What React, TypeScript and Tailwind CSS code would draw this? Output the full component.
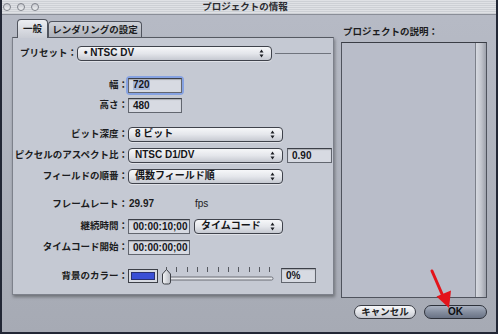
import React from "react";

const Arrows = () => (
  <svg width="5" height="9" viewBox="0 0 5 9" className="shrink-0">
    <path d="M2.5 0.5 L4.5 3.5 H0.5 Z M0.5 5.5 H4.5 L2.5 8.5 Z" fill="#1d1f24" />
  </svg>
);

type Box = { className?: string; children?: React.ReactNode };

function Popup({ className = "", children }: Box) {
  return (
    <div
      className={`flex h-[15px] items-center justify-between rounded-[4px] border border-[#3f424b] bg-gradient-to-b from-[#f6f7f9] via-[#e4e6eb] to-[#c6c9d1] pl-[6px] pr-[7px] text-[10px] font-bold text-[#141518] shadow-[0_1px_0_rgba(255,255,255,0.45)] ${className}`}
    >
      <span className="whitespace-nowrap leading-none">{children}</span>
      <Arrows />
    </div>
  );
}

function Field({ className = "", children }: Box) {
  return (
    <div
      className={`flex h-[15px] items-center border border-[#62666f] border-t-[#3c3f47] bg-[#d7dae2] px-[4px] text-[10px] font-bold text-[#15161a] shadow-[inset_0_1px_1px_rgba(0,0,0,0.22)] ${className}`}
    >
      {children}
    </div>
  );
}

function Row({ label, className = "", children }: { label: string; className?: string; children: React.ReactNode }) {
  return (
    <div className={`flex h-[16px] items-center ${className}`}>
      <div className="flex w-[115px] shrink-0 justify-end whitespace-nowrap text-[9.5px] font-bold leading-none text-[#1b1c20]">
        {label}
      </div>
      {children}
    </div>
  );
}

const Slider = () => (
  <svg width="112" height="19" viewBox="0 0 112 19" className="ml-[4px] shrink-0">
    {[4, 14, 25, 35, 45, 56, 66, 76, 87, 97, 107].map((x) => (
      <line key={x} x1={x + 0.5} y1="1" x2={x + 0.5} y2="6" stroke="#55585f" strokeWidth="1" />
    ))}
    <rect x="3" y="11" width="108" height="3" rx="1.5" fill="#e6e8ec" stroke="#6a6d75" strokeWidth="1" />
    <defs>
      <linearGradient id="knob" x1="0" y1="0" x2="1" y2="0">
        <stop offset="0" stopColor="#f4f5f7" />
        <stop offset="1" stopColor="#b8bbc3" />
      </linearGradient>
    </defs>
    <path d="M4.5 3.5 L8.5 8 V16 Q8.5 18 6.5 18 H2.5 Q0.5 18 0.5 16 V8 Z" fill="url(#knob)" stroke="#3d4047" strokeWidth="1" />
  </svg>
);

export default function App() {
  return (
    <div className="relative box-border flex h-[334px] w-[498px] flex-col overflow-hidden border-2 border-t-0 border-[#222735] bg-gradient-to-b from-[#b7bbc6] to-[#a6aab4] font-['Liberation_Sans','Noto_Sans_CJK_JP',sans-serif] text-[#1b1c20]">
      {/* title bar */}
      <div className="relative flex h-[15px] shrink-0 items-center justify-center border-b border-[#8a8e98] bg-[repeating-linear-gradient(180deg,#dfe1e5_0px,#dfe1e5_1px,#cdd0d5_1px,#cdd0d5_2px)]">
        <div className="absolute left-[1px] top-[3px] flex gap-[6px]">
          <span className="h-[8px] w-[8px] rounded-full border border-[#80838b] bg-gradient-to-b from-[#c8cad0] to-[#eef0f2]" />
          <span className="h-[8px] w-[8px] rounded-full border border-[#80838b] bg-gradient-to-b from-[#c8cad0] to-[#eef0f2]" />
          <span className="h-[8px] w-[8px] rounded-full border border-[#80838b] bg-gradient-to-b from-[#c8cad0] to-[#eef0f2]" />
        </div>
        <span className="pr-[8px] text-[9.5px] font-bold leading-none text-[#2a2b30]">プロジェクトの情報</span>
      </div>

      {/* main */}
      <div className="flex pl-[10px] pt-[4px]">
        {/* left: tabs + panel */}
        <div className="flex w-[322px] flex-col">
          <div className="relative z-10 flex h-[18px] items-end pl-[5px]">
            <div className="-mb-px flex h-[19px] w-[31px] items-center justify-center rounded-t-[4px] border border-b-0 border-[#50545e] bg-gradient-to-b from-[#eceef2] to-[#c9ccd4] text-[9.5px] font-bold leading-none">
              一般
            </div>
            <div className="flex h-[16px] w-[94px] items-center justify-center whitespace-nowrap rounded-t-[4px] border border-b-0 border-[#50545e] bg-gradient-to-b from-[#cfd2d9] to-[#adb1ba] text-[9.5px] font-bold leading-none">
              レンダリングの設定
            </div>
          </div>
          <div className="flex h-[258px] flex-col border border-[#7d818b] border-t-[#555962] bg-[#c5c9d3] shadow-[1px_2px_3px_rgba(0,0,0,0.35)]">
            {/* preset */}
            <div className="mt-[7px] flex h-[16px] items-center pl-[7px]">
              <span className="w-[57px] whitespace-nowrap text-[9.5px] font-bold leading-none">プリセット：</span>
              <Popup className="w-[195px]">• NTSC DV</Popup>
              <div className="ml-[3px] h-px w-[56px] bg-[#6f737c]" />
            </div>

            <Row label="幅：" className="mt-[16px]">
              <div className="rounded-[2px] shadow-[0_0_0_2px_#86a2e2]">
                <Field className="w-[54px]">
                  <span className="bg-[#a9b9da] leading-none">720</span>
                </Field>
              </div>
            </Row>
            <Row label="高さ：" className="mt-[4px]">
              <Field className="w-[54px]">480</Field>
            </Row>

            <Row label="ビット深度：" className="mt-[13px]">
              <Popup className="w-[155px]">8 ビット</Popup>
            </Row>
            <Row label="ピクセルのアスペクト比：" className="mt-[5px]">
              <Popup className="w-[155px]">NTSC D1/DV</Popup>
              <Field className="ml-[4px] w-[45px]">0.90</Field>
            </Row>
            <Row label="フィールドの順番：" className="mt-[5px]">
              <Popup className="w-[155px]">偶数フィールド順</Popup>
            </Row>

            <Row label="フレームレート：" className="mt-[12px]">
              <span className="w-[67px] pl-px text-[10px] font-bold leading-none">29.97</span>
              <span className="text-[10px] leading-none">fps</span>
            </Row>
            <Row label="継続時間：" className="mt-[6px]">
              <Field className="w-[62px]">00:00:10;00</Field>
              <Popup className="ml-[4px] w-[89px]">タイムコード</Popup>
            </Row>
            <Row label="タイムコード開始：" className="mt-[5px]">
              <Field className="w-[62px]">00:00:00;00</Field>
            </Row>

            <Row label="背景のカラー：" className="mt-[11px] h-[19px]">
              <div className="flex h-[14px] w-[30px] items-center justify-center border border-[#3d4048] bg-[#d7dae2] p-[2px]">
                <div className="h-full w-full border border-[#2a3070] bg-[#3a4fd6]" />
              </div>
              <Slider />
              <Field className="ml-[7px] w-[35px]">0%</Field>
            </Row>
          </div>
        </div>

        {/* right: description */}
        <div className="ml-[7px] flex w-[146px] flex-col">
          <div className="mt-[8px] h-[12px] whitespace-nowrap pl-[2px] text-[9.5px] font-bold leading-none">プロジェクトの説明：</div>
          <div className="mt-[3px] flex h-[256px] border border-[#4f535d] border-t-[#3a3d45] bg-[#b9bdc9]">
            <div className="flex-1" />
            <div className="w-[11px] border-l border-[#7c808a] bg-gradient-to-r from-[#d6d9e0] via-[#c3c6ce] to-[#9da1ab]" />
          </div>
        </div>
      </div>

      {/* buttons */}
      <div className="mt-[7px] flex justify-end gap-[8px] pr-[9px]">
        <div className="flex h-[14px] w-[62px] items-center justify-center rounded-full border border-[#3a3d45] bg-gradient-to-b from-[#f7f8fa] via-[#e2e4e9] to-[#c4c7cf] text-[9.5px] font-bold leading-none">
          キャンセル
        </div>
        <div className="flex h-[14px] w-[63px] items-center justify-center rounded-full border border-[#2e323b] bg-gradient-to-b from-[#a9b1c0] via-[#858e9f] to-[#6a7385] text-[10px] font-bold leading-none text-[#0c0d10]">
          OK
        </div>
      </div>

      {/* red pointer arrow */}
      <svg className="pointer-events-none absolute left-0 top-0" width="498" height="334" viewBox="0 0 498 334">
        <line x1="430" y1="271" x2="440" y2="294" stroke="#e3141b" strokeWidth="3" strokeLinecap="round" />
        <path d="M447 308 L434.5 296.5 L449 290.5 Z" fill="#e3141b" />
      </svg>
    </div>
  );
}
